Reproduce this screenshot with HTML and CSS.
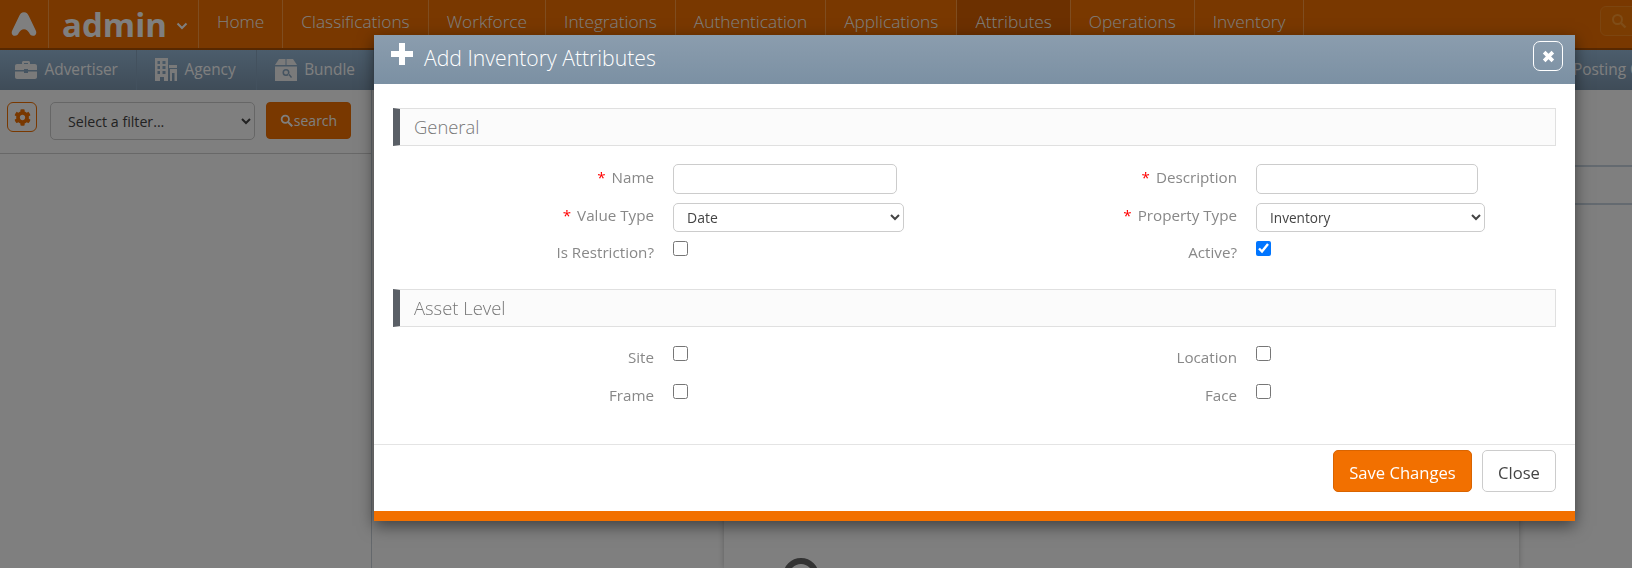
FILE: index.html
```html
<!DOCTYPE html>
<html lang="en">
<head>
<meta charset="utf-8">
<title>Add Inventory Attributes</title>
<link rel="stylesheet" href="styles.css">
</head>
<body>
<header class="topbar">
  <div class="logo"><svg viewBox="0 0 28 28" width="30" height="30"><path class="logo-mark" d="M14 3 C11.5 3 10.5 4.5 9.5 6.5 L3 20 C1.8 22.5 3 25 5.5 25 C7.5 25 8.4 24 9.2 22.2 C10.2 20.2 12 18.8 14 18.8 C16 18.8 17.8 20.2 18.8 22.2 C19.6 24 20.5 25 22.5 25 C25 25 26.2 22.5 25 20 L18.5 6.5 C17.5 4.5 16.5 3 14 3 Z"/></svg></div>
  <div class="brand"><span class="brand-name">admin</span><svg class="brand-caret" viewBox="0 0 12 8" width="12" height="8"><path d="M1.5 1.5 L6 6 L10.5 1.5" fill="none" stroke="currentColor" stroke-width="2"/></svg></div>
  <nav class="mainnav">
    <a class="mainnav-item">Home</a>
    <a class="mainnav-item">Classifications</a>
    <a class="mainnav-item">Workforce</a>
    <a class="mainnav-item">Integrations</a>
    <a class="mainnav-item">Authentication</a>
    <a class="mainnav-item">Applications</a>
    <a class="mainnav-item is-active">Attributes</a>
    <a class="mainnav-item">Operations</a>
    <a class="mainnav-item">Inventory</a>
  </nav>
  <div class="top-search"><svg viewBox="0 0 16 16" width="16" height="16"><circle cx="6.5" cy="6.5" r="4.5" fill="none" stroke="currentColor" stroke-width="2"/><path d="M10 10 L14.5 14.5" stroke="currentColor" stroke-width="2.4"/></svg></div>
</header>
<div class="subnav">
  <a class="subnav-item"><svg viewBox="0 0 22 18" width="22" height="18"><path class="sub-icon" d="M7 3 V1.5 C7 .7 7.7 0 8.5 0 H13.5 C14.300 0 15 .7 15 1.500 V3 H20 C21.100 3 22 3.900 22 5 V9 H13 V8 H9 V9 H0 V5 C0 3.900 .9 3 2 3 Z M9 2 V3 H13 V2 Z M0 10.500 H9 V12 H13 V10.500 H22 V16 C22 17.100 21.100 18 20 18 H2 C.9 18 0 17.100 0 16 Z"/></svg><span>Advertiser</span></a>
  <a class="subnav-item"><svg viewBox="0 0 22 23" width="22" height="23"><path class="sub-icon" fill-rule="evenodd" d="M0 0 H13 V23 H9 V19 H5 V23 H0 Z M2.500 3 V6 H5 V3 Z M7.500 3 V6 H10.500 V3 Z M2.500 8 V11 H5 V8 Z M7.500 8 V11 H10.500 V8 Z M2.500 13 V16 H5 V13 Z M7.500 13 V16 H10.500 V13 Z M14 7 H22 V10 H14 Z M15 11 H22 V23 H19.500 V15 H17 V23 H15 Z"/></svg><span>Agency</span></a>
  <a class="subnav-item"><svg viewBox="0 0 22 22" width="22" height="22"><path class="sub-icon" fill-rule="evenodd" d="M4 0 H10.500 V6 H0 Z M11.500 0 H18 L22 6 H11.500 Z M0 7.500 H22 V22 H0 Z M11 10 A3.500 3.500 0 1 0 11 17 A3.500 3.500 0 0 0 11 10 Z M11 11.500 A2 2 0 1 1 11 15.500 A2 2 0 0 1 11 11.500 Z M13.200 15.500 L16 19 L17 18 L14.200 14.500 Z"/></svg><span>Bundle</span></a>
  <a class="subnav-item subnav-item-end"><span>Posting Category</span></a>
</div>
<div class="toolbar">
  <button class="gear-btn" type="button"><svg viewBox="0 0 512 512" width="17" height="17"><path fill="currentColor" d="M487 316l-42-25c4-23 4-47 0-70l42-25c5-3 7-9 6-14-11-35-30-67-54-93-4-4-10-5-15-2l-42 25c-18-15-39-27-61-35V28c0-6-4-11-9-12-36-8-74-8-109 0-6 1-10 6-10 12v49c-22 8-43 20-61 35L90 87c-5-3-11-2-15 2-24 26-43 58-54 93-2 5 1 11 6 14l42 25c-4 23-4 47 0 70l-42 25c-5 3-8 9-6 14 11 35 30 67 54 93 4 4 10 5 15 2l42-25c18 15 39 27 61 35v49c0 6 4 11 10 12 36 8 73 8 109 0 5-1 9-6 9-12v-49c22-8 43-20 61-35l42 25c5 3 11 2 15-2 24-26 43-58 54-93 1-5-1-11-6-14zM256 336c-44 0-80-36-80-80s36-80 80-80 80 36 80 80-36 80-80 80z"/></svg></button>
  <select class="filter-select"><option>Select a filter...</option></select>
  <button class="search-btn" type="button"><svg viewBox="0 0 16 16" width="13" height="13"><circle cx="6.500" cy="6.500" r="4.500" fill="none" stroke="currentColor" stroke-width="2.200"/><path d="M10 10 L15 15" stroke="currentColor" stroke-width="2.600"/></svg>search</button>
</div>
<main class="workspace">
  <aside class="side-panel"></aside>
  <section class="content">
    <div class="content-card"><div class="ring"></div></div>
    <div class="content-rail"><div class="rail-row"></div><div class="rail-row"></div></div>
  </section>
</main>
<div class="backdrop"></div>
<div class="modal">
  <div class="modal-header">
    <svg class="modal-plus" viewBox="0 0 24 24" width="24" height="24"><path d="M9 1 H15 V9 H23 V15 H15 V23 H9 V15 H1 V9 H9 Z"/></svg>
    <h1 class="modal-title">Add Inventory Attributes</h1>
    <button class="modal-x" type="button"><svg viewBox="0 0 12 12" width="13" height="13"><path d="M2 2 L10 10 M10 2 L2 10" stroke="currentColor" stroke-width="3.400"/></svg></button>
  </div>
  <div class="modal-body">
    <h2 class="section-bar">General</h2>
    <div class="form-grid form-general">
      <label class="field-label field-raised"><span class="req">*</span>Name</label>
      <input class="text-input w-left" type="text">
      <label class="field-label field-raised"><span class="req">*</span>Description</label>
      <input class="text-input w-right" type="text">
      <label class="field-label field-raised"><span class="req">*</span>Value Type</label>
      <select class="select-input sel-left"><option>Date</option></select>
      <label class="field-label field-raised"><span class="req">*</span>Property Type</label>
      <select class="select-input sel-right"><option>Inventory</option></select>
      <label class="field-label check-label field-raised">Is Restriction?</label>
      <input class="check" type="checkbox">
      <label class="field-label check-label field-raised">Active?</label>
      <input class="check" type="checkbox" checked>
    </div>
    <h2 class="section-bar">Asset Level</h2>
    <div class="form-grid form-assets">
      <label class="field-label check-label">Site</label>
      <input class="check" type="checkbox">
      <label class="field-label check-label">Location</label>
      <input class="check" type="checkbox">
      <label class="field-label check-label">Frame</label>
      <input class="check" type="checkbox">
      <label class="field-label check-label">Face</label>
      <input class="check" type="checkbox">
    </div>
  </div>
  <div class="modal-footer">
    <button class="btn btn-save" type="button">Save Changes</button>
    <button class="btn btn-close" type="button">Close</button>
  </div>
  <div class="modal-strip"></div>
</div>
</body>
</html>
```
FILE: styles.css
```css
* { box-sizing: border-box; }
html, body { margin: 0; height: 100%; overflow: hidden; }
body { font-family: "Open Sans", "Noto Sans", sans-serif; background: #fff; color: #333; }

.topbar { display: flex; height: 50px; background: #f27000; border-bottom: 2px solid #b05000; align-items: stretch; }
.logo { width: 49px; display: flex; align-items: center; justify-content: center; border-right: 1px solid #ff9a40; }
.logo-mark { fill: #fff; }
.brand { width: 150px; display: flex; align-items: center; padding-left: 13px; gap: 9px; border-right: 1px solid #ff9a40; color: #fff; }
.brand-name { font-size: 33px; font-weight: 700; line-height: 1; }
.brand-caret { margin-top: 4px; }
.mainnav { display: flex; flex: 1; }
.mainnav-item { display: flex; align-items: center; padding: 0 18px 5px; font-size: 17.3px; color: #fff; border-right: 1px solid #ff9a40; font-weight: 300; }
.mainnav-item.is-active { background: #d86000; }
.top-search { margin: 6px 0 0 auto; width: 40px; height: 30px; border: 1px solid #f98a20; border-radius: 6px 0 0 6px; color: #ff9a30; display: flex; align-items: center; padding-left: 10px; position: relative; left: 8px; background: #f57804; }

.subnav { display: flex; height: 40px; background: linear-gradient(#98bad8, #7e98b0); }
.subnav-item { display: flex; align-items: center; gap: 7.5px; padding: 0 18px 1px 15px; font-size: 15.4px; color: #fff; border-right: 1px solid #86a3bd; }
.subnav-item:nth-child(2), .subnav-item:nth-child(3) { padding-left: 18px; }
.subnav-item:nth-child(2) { padding-right: 20px; }
.subnav-item-end { margin-left: auto; border: 0; padding: 0 0 1px 0; white-space: nowrap; width: 59px; overflow: hidden; }
.sub-icon { fill: #f4f4f4; }

.toolbar { display: flex; align-items: flex-start; height: 64px; padding-top: 12px; padding-left: 7px; background: #fff; border-bottom: 1px solid #d0d0d0; width: 372px; }
.gear-btn { width: 30px; height: 30px; padding: 0; border: 1px solid #f27000; border-radius: 6px; background: #fff; color: #f27000; display: flex; align-items: center; justify-content: center; margin-right: 13px; }
.filter-select { width: 205px; height: 38px; padding-left: 13px; border: 1px solid #ccc; border-radius: 5px; background: #fff; font: 14.2px "Open Sans", sans-serif; color: #444; margin-right: 11px; }
.search-btn { width: 85px; height: 37px; padding: 0; border: 1px solid #ee6e00; border-radius: 4px; background: #f27000; color: #fff; font: 14px "Open Sans", sans-serif; display: flex; align-items: center; justify-content: center; gap: 1px; }

.workspace { display: flex; position: absolute; top: 90px; left: 0; right: 0; bottom: 0; }
.side-panel { width: 372px; border-right: 1px solid #c8d0d8; }
.content { flex: 1; display: flex; position: relative; }
.content-card { position: absolute; left: 352px; width: 795px; top: 0; bottom: 0; box-shadow: 0 0 6px rgba(0,0,0,.25); background: #fff; }
.ring { position: absolute; left: 59px; top: 468px; width: 36px; height: 36px; border: 6px solid #666; border-radius: 50%; }
.content-rail { position: absolute; left: 1203px; right: 0; top: 75px; }
.rail-row { height: 38px; border-top: 2px solid #c8d4e0; }

.backdrop { position: fixed; inset: 0; background: rgba(0,0,0,.5); }

.modal { position: absolute; left: 374px; top: 35px; width: 1201px; height: 486px; background: #fff; display: flex; flex-direction: column; box-shadow: 0 5px 15px rgba(0,0,0,.5); }
.modal-header { height: 49px; flex: none; display: flex; align-items: flex-start; background: linear-gradient(#8b9dae, #7b90a3); color: #fff; padding: 6px 12px 0 16px; }
.modal-plus { fill: #fff; flex: none; margin-top: 1px; }
.modal-title { margin: 2px 0 0 10px; font-size: 21.2px; line-height: 30px; font-weight: 300; color: #fff; }
.modal-x { margin-left: auto; width: 30px; height: 30px; border: 1px solid #fff; border-radius: 7px; background: transparent; color: #fff; padding: 0; display: flex; align-items: center; justify-content: center; }

.modal-body { flex: 1; padding: 24px 19px 0; }
.section-bar { margin: 0; height: 38px; padding-left: 14px; border: 1px solid #e0e0e0; border-left: 7px solid #5a5f66; background: #fbfbfb; font-size: 18.4px; line-height: 35px; font-weight: 300; color: #777; }
.form-grid { display: grid; grid-template-columns: 261px 284px 261px 1fr; column-gap: 19px; align-items: center; }
.form-general { padding-top: 18px; grid-template-rows: 30px 30px 24px; row-gap: 8px; height: 143px; align-content: start; }
.form-assets { padding-top: 18px; grid-template-rows: 20px 20px; row-gap: 18px; }
.field-label { text-align: right; font-size: 15.2px; color: #888; font-weight: 400; }
.field-raised { position: relative; top: -2px; }
.req { color: #f00; margin-right: 6px; }
.check-label { padding-top: 4px; }
.text-input { height: 30px; border: 1px solid #ccc; border-radius: 5px; background: #fff; padding: 0 8px; }
.w-left { width: 224px; }
.w-right { width: 222px; }
.select-input { height: 29px; align-self: end; border: 1px solid #ccc; border-radius: 5px; background: #fff; font: 14px "Open Sans", sans-serif; color: #444; padding-left: 9px; }
.sel-left { width: 231px; }
.sel-right { width: 229px; font-size: 13.6px; }
.check { width: 15px; height: 15px; margin: 1px 0 0; align-self: start; }

.modal-footer { flex: none; height: 67px; border-top: 1px solid #e4e4e4; display: flex; justify-content: flex-end; align-items: flex-start; gap: 10px; padding: 5px 19px 0 0; }
.btn { height: 42px; border-radius: 5px; font: 16.6px "Open Sans", sans-serif; padding: 3px 0 0; }
.btn-save { width: 139px; background: #f27000; border: 1px solid #d96400; color: #fff; }
.btn-close { width: 74px; background: #fff; border: 1px solid #ccc; color: #444; }
.modal-strip { flex: none; height: 10px; background: #f27000; }
```
